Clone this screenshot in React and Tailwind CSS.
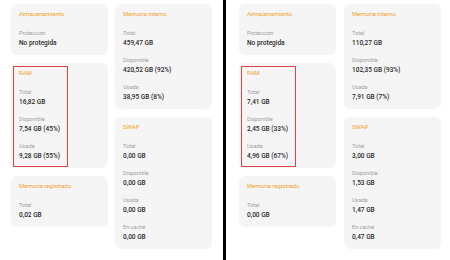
import React from "react";

const Card = ({ title, fields, marked }) => (
  <div className="relative rounded-[6px] bg-[#f5f5f5] px-[8px] pt-[6px] pb-[7px]">
    <div className="text-[6px] leading-[8px] text-[#f3a22a]">{title}</div>
    <div className="flex flex-col gap-[8px] mt-[11px]">
      {fields.map((f, i) => (
        <div key={i}>
          <div className="text-[5.5px] leading-[8px] text-[#9e9e9e]">{f[0]}</div>
          <div className="mt-[1px] text-[6.5px] leading-[10px] font-medium text-[#2b2b2b]">{f[1]}</div>
        </div>
      ))}
    </div>
    {/* red highlight box drawn over the RAM card */}
    {marked && (
      <div className="absolute left-[2px] top-[3px] w-[55px] h-[101px] border-[1.5px] border-[#d9454b]"></div>
    )}
  </div>
);

const Panel = ({ data, gap }) => (
  <div className={`flex pt-[4px] ${gap}`}>
    <div className="flex flex-col gap-[8px] w-[97px]">
      <Card title="Almacenamiento" fields={[["Proteccion", "No protegida"]]} />
      <Card title="RAM" fields={data.ram} marked />
      <Card title="Memoria registrado" fields={[["Total", data.reg]]} />
    </div>
    <div className="flex flex-col gap-[8px] w-[97px]">
      <Card title="Memoria interno" fields={data.internal} />
      <Card title="SWAP" fields={data.swap} />
    </div>
  </div>
);

const left = {
  ram: [["Total", "16,82 GB"], ["Disponible", "7,54 GB (45%)"], ["Usada", "9,28 GB (55%)"]],
  reg: "0,02 GB",
  internal: [["Total", "459,47 GB"], ["Disponible", "420,52 GB (92%)"], ["Usada", "38,95 GB (8%)"]],
  swap: [["Total", "0,00 GB"], ["Disponible", "0,00 GB"], ["Usada", "0,00 GB"], ["En caché", "0,00 GB"]],
};

const right = {
  ram: [["Total", "7,41 GB"], ["Disponible", "2,45 GB (33%)"], ["Usada", "4,96 GB (67%)"]],
  reg: "0,00 GB",
  internal: [["Total", "110,27 GB"], ["Disponible", "102,35 GB (93%)"], ["Usada", "7,91 GB (7%)"]],
  swap: [["Total", "3,00 GB"], ["Disponible", "1,53 GB"], ["Usada", "1,47 GB"], ["En caché", "0,47 GB"]],
};

export default function App() {
  return (
    <div
      className="flex w-[450px] h-[260px] bg-white overflow-hidden"
      style={{ fontFamily: "Roboto, 'Noto Sans', sans-serif" }}
    >
      <div className="w-[223px] pl-[11px]">
        <Panel data={left} gap="gap-[7px]" />
      </div>
      <div className="w-[3px] bg-black"></div>
      <div className="flex-1 pl-[13px]">
        <Panel data={right} gap="gap-[8px]" />
      </div>
    </div>
  );
}
